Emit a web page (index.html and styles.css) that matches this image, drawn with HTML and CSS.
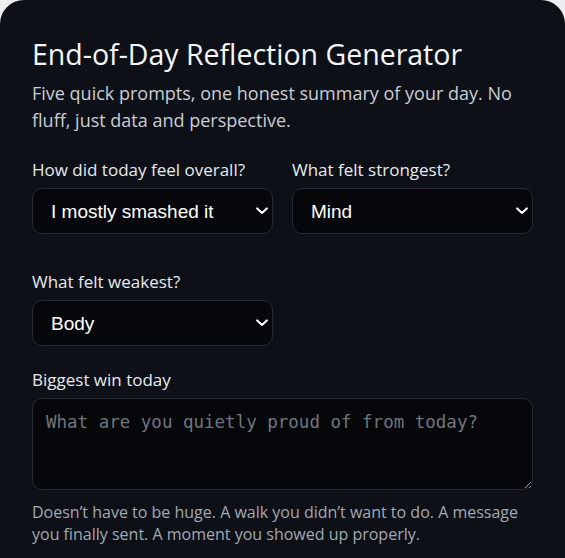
FILE: index.html
```html
<!DOCTYPE html>
<html lang="en">
<head>
<meta charset="utf-8">
<title>End-of-Day Reflection Generator</title>
<link rel="stylesheet" href="styles.css">
</head>
<body>
<main class="card">
  <h1 class="title">End-of-Day Reflection Generator</h1>
  <p class="subtitle">Five quick prompts, one honest summary of your day. No fluff, just data and perspective.</p>
  <div class="grid">
    <div class="field">
      <label class="label" for="overall">How did today feel overall?</label>
      <div class="select-wrap">
        <select id="overall" class="select">
          <option>I mostly smashed it</option>
        </select>
        <svg class="chev" width="12" height="8" viewBox="0 0 12 8"><path d="M1.2 1.4 L6 6 L10.8 1.4" fill="none" stroke="#ffffff" stroke-width="2.1" stroke-linecap="round" stroke-linejoin="round"/></svg>
      </div>
    </div>
    <div class="field">
      <label class="label" for="strongest">What felt strongest?</label>
      <div class="select-wrap">
        <select id="strongest" class="select">
          <option>Mind</option>
        </select>
        <svg class="chev" width="12" height="8" viewBox="0 0 12 8"><path d="M1.2 1.4 L6 6 L10.8 1.4" fill="none" stroke="#ffffff" stroke-width="2.1" stroke-linecap="round" stroke-linejoin="round"/></svg>
      </div>
    </div>
    <div class="field">
      <label class="label" for="weakest">What felt weakest?</label>
      <div class="select-wrap">
        <select id="weakest" class="select">
          <option>Body</option>
        </select>
        <svg class="chev" width="12" height="8" viewBox="0 0 12 8"><path d="M1.2 1.4 L6 6 L10.8 1.4" fill="none" stroke="#ffffff" stroke-width="2.1" stroke-linecap="round" stroke-linejoin="round"/></svg>
      </div>
    </div>
  </div>
  <div class="field wide">
    <label class="label" for="win">Biggest win today</label>
    <textarea id="win" class="textarea" placeholder="What are you quietly proud of from today?"></textarea>
    <p class="hint">Doesn’t have to be huge. A walk you didn’t want to do. A message you finally sent. A moment you showed up properly.</p>
  </div>
</main>
</body>
</html>
```
FILE: styles.css
```css
html, body {
  margin: 0;
  padding: 0;
  background: #eceef1;
}
body {
  font-family: "Open Sans", "Noto Sans", sans-serif;
  color: #f3f4f6;
}
.card {
  background: #0d1117;
  border-radius: 24px;
  width: 565px;
  min-height: 600px;
  box-sizing: border-box;
  padding: 36px 32px 32px 32px;
}
.title {
  margin: 0;
  font-weight: 400;
  font-size: 28.5px;
  line-height: 36px;
  color: #f5f6f8;
}
.subtitle {
  margin: 8px 0 0 0;
  font-size: 18px;
  line-height: 27px;
  color: #c9cdd3;
}
.grid {
  margin-top: 24px;
  display: grid;
  grid-template-columns: 1fr 1fr;
  column-gap: 19px;
  row-gap: 36px;
}
.field {
  display: flex;
  flex-direction: column;
}
.wide {
  margin-top: 22px;
}
.label {
  font-size: 17px;
  line-height: 24px;
  margin-bottom: 6px;
  color: #e7e9ec;
}
.select-wrap {
  position: relative;
  display: flex;
}
.select {
  appearance: none;
  -webkit-appearance: none;
  flex: 1;
  min-width: 0;
  height: 46px;
  background: #05070a;
  color: #ffffff;
  border: 1px solid #262b33;
  border-radius: 10px;
  padding: 0 30px 0 18px;
  font-family: "Liberation Sans", Arial, sans-serif;
  font-size: 19px;
}
.chev {
  position: absolute;
  right: 5px;
  top: 19px;
  pointer-events: none;
}
.textarea {
  color-scheme: dark;
  height: 92px;
  box-sizing: border-box;
  background: #05070a;
  color: #ffffff;
  border: 1px solid #262b33;
  border-radius: 10px;
  padding: 12px 13px;
  font-family: "DejaVu Sans Mono", "Liberation Mono", monospace;
  font-size: 17.5px;
  line-height: 22px;
  resize: vertical;
}
.textarea::placeholder {
  color: #71757c;
}
.hint {
  margin: 11px 0 0 0;
  font-size: 16px;
  line-height: 22px;
  color: #a3a8b0;
}
```
